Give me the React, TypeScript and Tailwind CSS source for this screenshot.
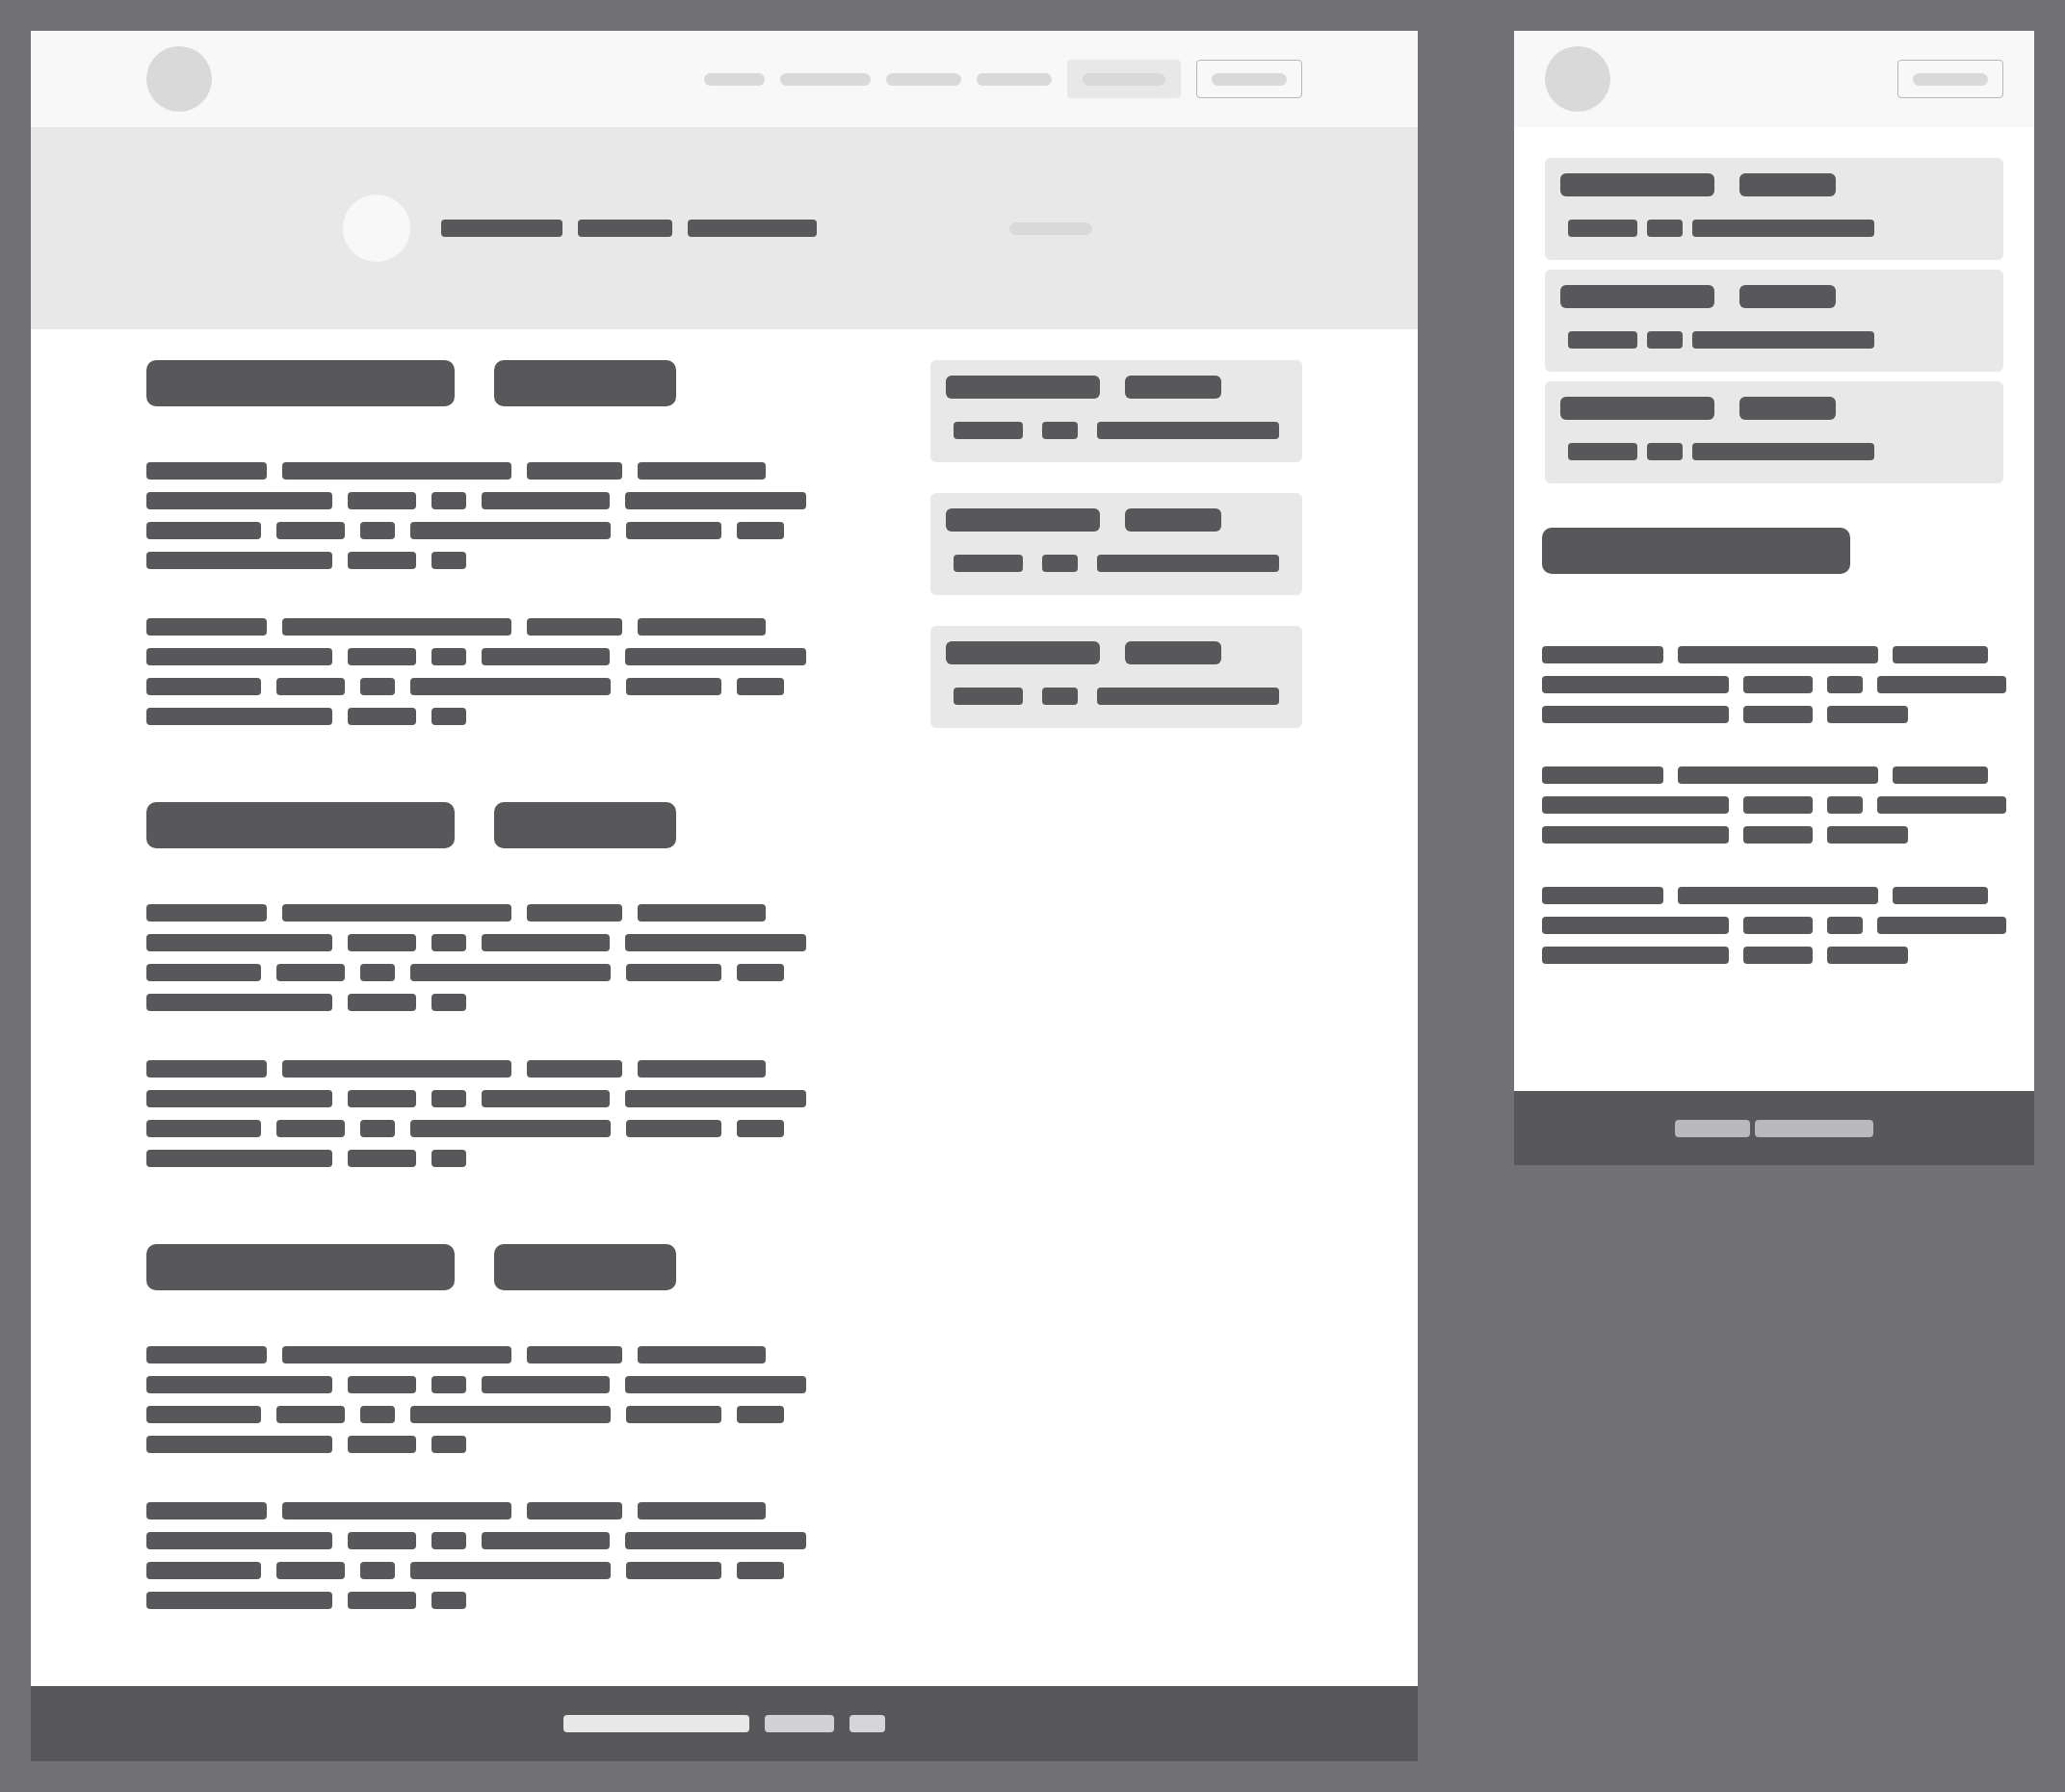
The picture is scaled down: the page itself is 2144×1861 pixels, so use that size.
import React from "react";

const DARK = "bg-[#58585a]";

function Bar({ w, h = 18, className = "" }: { w: number; h?: number; className?: string }) {
  return <div className={`${DARK} rounded-[4px] shrink-0 ${className}`} style={{ width: w, height: h }} />;
}

function Row({ widths, gap }: { widths: number[]; gap: string }) {
  return (
    <div className={`flex ${gap}`}>
      {widths.map((w, i) => (
        <Bar key={i} w={w} />
      ))}
    </div>
  );
}

const deskPara = [
  [125, 238, 99, 133],
  [193, 71, 36, 133, 188],
  [119, 71, 36, 208, 99, 49],
  [193, 71, 36],
];

const mobPara = [
  [126, 208, 99],
  [194, 72, 37, 134],
  [194, 72, 84],
];

function DeskParagraph() {
  return (
    <div className="flex flex-col gap-[13px]">
      {deskPara.map((r, i) => (
        <Row key={i} widths={r} gap="gap-4" />
      ))}
    </div>
  );
}

function MobParagraph() {
  return (
    <div className="flex flex-col gap-[13px]">
      {mobPara.map((r, i) => (
        <Row key={i} widths={r} gap="gap-[15px]" />
      ))}
    </div>
  );
}

function Card({ mobile }: { mobile?: boolean }) {
  return (
    <div className="bg-[#e8e8e8] rounded-[6px] p-4 h-[106px]">
      <div className="flex gap-[26px]">
        <div className={`${DARK} rounded-[6px] w-[160px] h-[24px]`} />
        <div className={`${DARK} rounded-[6px] w-[100px] h-[24px]`} />
      </div>
      <div className={`mt-4 p-2 flex ${mobile ? "gap-[10px]" : "gap-5"}`}>
        <Bar w={72} />
        <Bar w={37} />
        <Bar w={189} />
      </div>
    </div>
  );
}

function Section({ last }: { last?: boolean }) {
  return (
    <div className={last ? "" : "mb-[80px]"}>
      <div className="flex gap-[41px]">
        <div className={`${DARK} rounded-[10px] w-[320px] h-[48px]`} />
        <div className={`${DARK} rounded-[10px] w-[189px] h-[48px]`} />
      </div>
      <div className="mt-[58px]">
        <DeskParagraph />
      </div>
      <div className="mt-[51px]">
        <DeskParagraph />
      </div>
    </div>
  );
}

function Pill({ w, active }: { w: number; active?: boolean }) {
  return <div className="h-[13px] rounded-full bg-[#d9d9d9]" style={{ width: w }} />;
}

function Desktop() {
  return (
    <div className="w-[1440px] shrink-0 bg-white flex flex-col">
      <header className="h-[100px] bg-[#f8f8f8] px-[120px] flex items-center justify-between">
        <div className="w-[68px] h-[68px] rounded-full bg-[#d9d9d9]" />
        <nav className="flex items-center gap-4">
          <Pill w={63} />
          <Pill w={94} />
          <Pill w={78} />
          <Pill w={78} />
          <div className="h-[40px] px-4 flex items-center bg-[#e8e8e8] rounded-[4px]">
            <Pill w={86} />
          </div>
          <div className="h-[40px] w-[110px] flex items-center justify-center border border-[#b5b5b7] rounded-[4px]">
            <Pill w={78} />
          </div>
        </nav>
      </header>
      <section className="h-[210px] bg-[#e8e8e8] flex items-center pl-[324px]">
        <div className="w-[70px] h-[70px] rounded-full bg-[#f8f8f8]" />
        <div className="flex gap-4 ml-8">
          <Bar w={126} />
          <Bar w={98} />
          <Bar w={134} />
        </div>
        <div className="ml-[200px] w-[86px] h-[13px] rounded-full bg-[#d9d9d9]" />
      </section>
      <main className="px-[120px] pt-8 pb-[80px] flex justify-between">
        <div>
          <Section />
          <Section />
          <Section last />
        </div>
        <aside className="w-[386px] flex flex-col gap-8">
          <Card />
          <Card />
          <Card />
        </aside>
      </main>
      <footer className={`h-[78px] ${DARK} flex items-center justify-center gap-4`}>
        <div className="w-[193px] h-[18px] rounded-[4px] bg-[#e8e8e8]" />
        <div className="w-[72px] h-[18px] rounded-[4px] bg-[#d2d2d4]" />
        <div className="w-[37px] h-[18px] rounded-[4px] bg-[#d6d6d8]" />
      </footer>
    </div>
  );
}

function Mobile() {
  return (
    <div className="w-[540px] shrink-0 bg-white flex flex-col">
      <header className="h-[100px] bg-[#f8f8f8] px-8 flex items-center justify-between">
        <div className="w-[68px] h-[68px] rounded-full bg-[#d9d9d9]" />
        <div className="h-[40px] w-[110px] flex items-center justify-center border border-[#b5b5b7] rounded-[4px]">
          <div className="w-[78px] h-[13px] rounded-full bg-[#d9d9d9]" />
        </div>
      </header>
      <main className="px-[29px] pt-8 pb-[132px]">
        <div className="px-[3px] flex flex-col gap-[10px]">
          <Card mobile />
          <Card mobile />
          <Card mobile />
        </div>
        <div className={`mt-[46px] ${DARK} rounded-[10px] w-[320px] h-[48px]`} />
        <div className="mt-[75px] flex flex-col gap-[45px]">
          <MobParagraph />
          <MobParagraph />
          <MobParagraph />
        </div>
      </main>
      <footer className={`h-[77px] ${DARK} flex items-center justify-center gap-[5px]`}>
        <div className="w-[78px] h-[18px] rounded-[4px] bg-[#b9b9bb]" />
        <div className="w-[123px] h-[18px] rounded-[4px] bg-[#b9b9bb]" />
      </footer>
    </div>
  );
}

export default function App() {
  return (
    <div className="w-[2144px] min-h-[1861px] bg-[#727176] p-8 flex items-start gap-[100px]">
      <Desktop />
      <Mobile />
    </div>
  );
}
